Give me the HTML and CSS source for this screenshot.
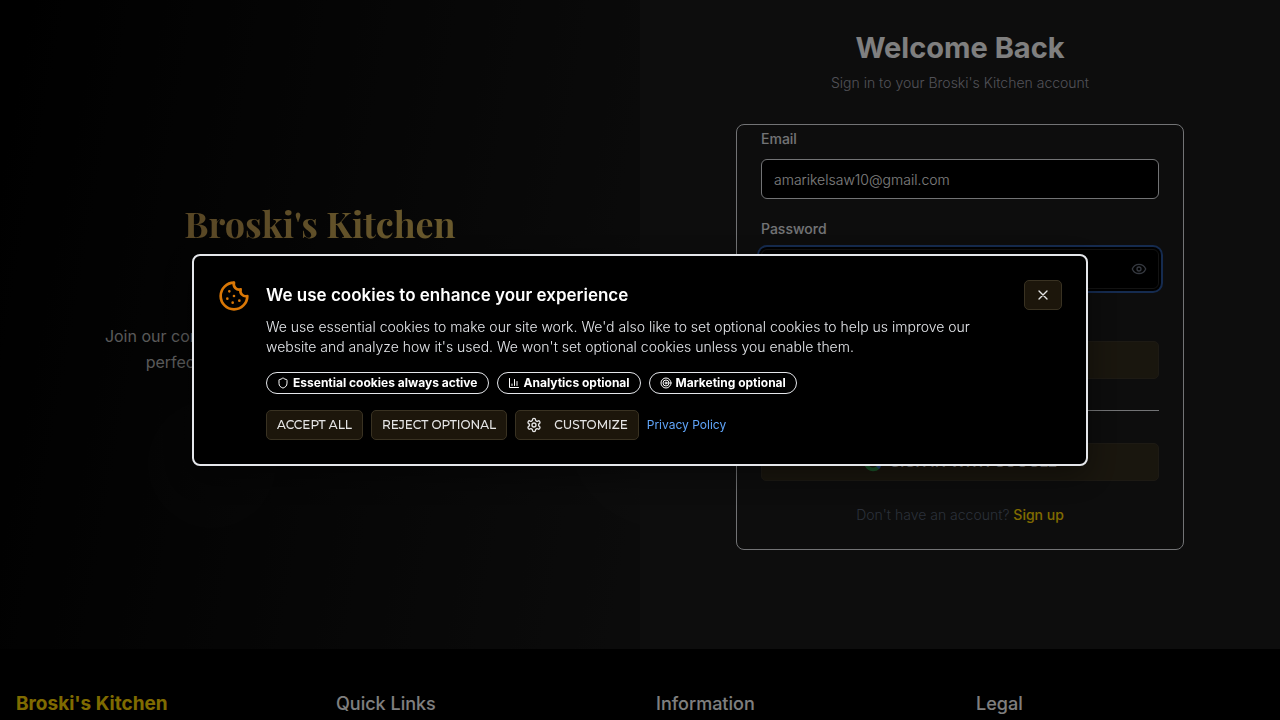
FILE: index.html
```html
<!DOCTYPE html>
<html lang="en">
<head>
<meta charset="utf-8">
<meta name="viewport" content="width=device-width, initial-scale=1">
<title>Broski's Kitchen - Sign in</title>
<link rel="stylesheet" href="styles.css">
</head>
<body>
<main class="auth">
  <section class="hero">
    <span class="orb orb-small"></span>
    <span class="orb orb-large"></span>
    <h1 class="hero-title">Broski's Kitchen</h1>
    <p class="hero-text">Join our community of food enthusiasts and discover the perfect blend of flavors in each and every bite</p>
  </section>
  <section class="login">
    <h2 class="login-title">Welcome Back</h2>
    <p class="login-subtitle">Sign in to your Broski's Kitchen account</p>
    <form class="card">
      <label class="label" for="email">Email</label>
      <input class="input" id="email" type="email" value="amarikelsaw10@gmail.com">
      <label class="label" for="password">Password</label>
      <div class="password focused">
        <input class="input" id="password" type="password">
        <button class="eye" type="button" aria-label="Show password">
          <svg width="16" height="16" viewBox="0 0 24 24" class="stroke"><path d="M2.1 12.3a1 1 0 0 1 0-.7 10.8 10.8 0 0 1 19.8 0 1 1 0 0 1 0 .7 10.8 10.8 0 0 1-19.8 0"/><circle cx="12" cy="12" r="3"/></svg>
        </button>
      </div>
      <button class="btn btn-wide btn-submit" type="submit">Sign in</button>
      <hr class="divider">
      <button class="btn btn-wide" type="button">
        <svg width="20" height="20" viewBox="0 0 24 24"><path fill="#4285F4" d="M22.6 12.3c0-.8-.1-1.5-.2-2.3H12v4.300h5.900a5 5 0 0 1-2.200 3.300v2.800h3.600c2.100-2 3.300-4.800 3.300-8.100z"/><path fill="#34A853" d="M12 23c3 0 5.500-1 7.300-2.700l-3.600-2.800c-1 .7-2.200 1.100-3.700 1.100-2.900 0-5.300-1.900-6.200-4.500H2.200v2.800A11 11 0 0 0 12 23z"/><path fill="#FBBC05" d="M5.800 14.100a6.600 6.600 0 0 1 0-4.200V7.100H2.200a11 11 0 0 0 0 9.800z"/><path fill="#EA4335" d="M12 5.400c1.600 0 3.100.6 4.200 1.600l3.200-3.100A11 11 0 0 0 2.200 7.100l3.600 2.800C6.700 7.300 9.100 5.400 12 5.400z"/></svg>
        <span>Sign in with Google</span>
      </button>
      <p class="signup">Don't have an account? <a href="#">Sign up</a></p>
    </form>
  </section>
</main>
<footer class="footer">
  <h2 class="brand">Broski's Kitchen</h2>
  <h3 class="footer-title">Quick Links</h3>
  <h3 class="footer-title">Information</h3>
  <h3 class="footer-title">Legal</h3>
</footer>
<div class="overlay">
  <div class="modal" role="dialog" aria-labelledby="cookie-title">
    <svg class="cookie stroke" width="32" height="32" viewBox="0 0 24 24"><path d="M12 2a10 10 0 1 0 10 10 4 4 0 0 1-5-5 4 4 0 0 1-5-5"/><path d="M8.500 8.500v.01M16 15.500v.01M12 12v.01M11 17v.01M7 14v.01"/></svg>
    <div class="modal-body">
      <h2 class="modal-title" id="cookie-title">We use cookies to enhance your experience</h2>
      <p class="modal-text">We use essential cookies to make our site work. We'd also like to set optional cookies to help us improve our website and analyze how it's used. We won't set optional cookies unless you enable them.</p>
      <div class="badges">
        <span class="badge"><svg class="stroke" width="12" height="12" viewBox="0 0 24 24"><path d="M20 13c0 5-3.500 7.500-7.700 9a1 1 0 0 1-.6 0C7.500 20.500 4 18 4 13V6a1 1 0 0 1 1-1c2 0 4.500-1.200 6.200-2.700a1.200 1.200 0 0 1 1.600 0C14.500 3.800 17 5 19 5a1 1 0 0 1 1 1z"/></svg>Essential cookies always active</span>
        <span class="badge"><svg class="stroke" width="12" height="12" viewBox="0 0 24 24"><path d="M3 3v18h18M18 17V9M13 17V5M8 17v-3"/></svg>Analytics optional</span>
        <span class="badge"><svg class="stroke" width="12" height="12" viewBox="0 0 24 24"><circle cx="12" cy="12" r="10"/><circle cx="12" cy="12" r="6"/><circle cx="12" cy="12" r="2"/></svg>Marketing optional</span>
      </div>
      <div class="actions">
        <button class="btn" type="button">Accept All</button>
        <button class="btn" type="button">Reject Optional</button>
        <button class="btn btn-icon" type="button"><svg class="stroke" width="16" height="16" viewBox="0 0 24 24"><path d="M12.220 2h-.44a2 2 0 0 0-2 2v.18a2 2 0 0 1-1 1.730l-.43.25a2 2 0 0 1-2 0l-.15-.08a2 2 0 0 0-2.730.73l-.22.38a2 2 0 0 0 .73 2.730l.15.1a2 2 0 0 1 1 1.720v.51a2 2 0 0 1-1 1.740l-.15.09a2 2 0 0 0-.73 2.730l.22.38a2 2 0 0 0 2.730.73l.15-.08a2 2 0 0 1 2 0l.43.25a2 2 0 0 1 1 1.730V20a2 2 0 0 0 2 2h.44a2 2 0 0 0 2-2v-.18a2 2 0 0 1 1-1.730l.43-.25a2 2 0 0 1 2 0l.15.08a2 2 0 0 0 2.730-.73l.22-.39a2 2 0 0 0-.73-2.730l-.15-.08a2 2 0 0 1-1-1.740v-.5a2 2 0 0 1 1-1.740l.15-.09a2 2 0 0 0 .73-2.730l-.22-.38a2 2 0 0 0-2.730-.73l-.15.08a2 2 0 0 1-2 0l-.43-.25a2 2 0 0 1-1-1.730V4a2 2 0 0 0-2-2z"/><circle cx="12" cy="12" r="3"/></svg>Customize</button>
        <a class="policy" href="#">Privacy Policy</a>
      </div>
    </div>
    <button class="btn close" type="button" aria-label="Close"><svg class="stroke" width="16" height="16" viewBox="0 0 24 24"><path d="M18 6 6 18M6 6l12 12"/></svg></button>
  </div>
</div>
</body>
</html>
```
FILE: styles.css
```css
* { box-sizing: border-box; }
body {
  margin: 0;
  height: 100vh;
  overflow: hidden;
  background: #000;
  color: #fff;
  font-family: Inter, "Liberation Sans", sans-serif;
  font-size: 14px;
  font-weight: 300;
  line-height: 20px;
}
h1, h2, h3, p { margin: 0; }
button, input { font: inherit; }
.stroke {
  fill: none;
  stroke: currentColor;
  stroke-width: 2;
  stroke-linecap: round;
  stroke-linejoin: round;
  flex: none;
}

.auth {
  display: grid;
  grid-template-columns: 1fr 1fr;
  min-height: calc(100vh - 71px);
}
.hero {
  position: relative;
  overflow: hidden;
  display: flex;
  flex-direction: column;
  align-items: center;
  padding: 195px 32px 0;
  background: linear-gradient(100deg, #000, #171717);
  text-align: center;
}
.orb {
  position: absolute;
  border-radius: 50%;
  background: rgba(255, 255, 255, 0.012);
}
.orb-small { width: 128px; height: 128px; left: 148px; bottom: 121px; }
.orb-large { width: 192px; height: 192px; right: -120px; bottom: 121px; }
.hero-title {
  font-family: "Playfair Display", "Liberation Serif", serif;
  font-size: 36px;
  line-height: 56px;
  font-weight: 700;
  background: linear-gradient(90deg, #b08d4a, #d4b45a);
  background-clip: text;
  color: transparent;
}
.hero-text {
  max-width: 448px;
  margin-top: 72px;
  font-size: 16px;
  font-weight: 400;
  line-height: 26px;
  color: #b3b3b3;
}

.login {
  display: flex;
  flex-direction: column;
  align-items: center;
  padding: 28px 32px 0;
  background: #1a1a1a;
}
.login-title { font-size: 29px; line-height: 40px; font-weight: 700; }
.login-subtitle { margin-top: 5px; color: #a2a2ae; }
.card {
  display: flex;
  flex-direction: column;
  width: 100%;
  max-width: 448px;
  margin-top: 31px;
  padding: 4px 24px 24px;
  border: 1px solid #e5e7eb;
  border-radius: 8px;
}
.label { font-weight: 500; color: #e5e7eb; }
.input {
  width: 100%;
  height: 40px;
  margin-top: 10px;
  padding: 0 12px;
  border: 1px solid #e5e7eb;
  border-radius: 6px;
  background: #000;
  color: #fff;
}
.input + .label { margin-top: 20px; }
.password { position: relative; margin-top: 10px; }
.password .input { display: block; margin: 0; border-color: #262626; }
.focused .input { box-shadow: 0 0 0 2px #000, 0 0 0 4px #2b569f; }
.eye {
  position: absolute;
  top: 0;
  right: 0;
  display: grid;
  place-items: center;
  width: 40px;
  height: 40px;
  padding: 0;
  border: 0;
  background: none;
  color: #6b7280;
}
.btn {
  display: flex;
  align-items: center;
  justify-content: center;
  height: 30px;
  padding: 0 10px;
  border: 1px solid #393222;
  border-radius: 5px;
  background: #1c160b;
  color: #e5e5e5;
  font-family: Montserrat, Inter, sans-serif;
  font-size: 12px;
  font-weight: 500;
  text-transform: uppercase;
  white-space: nowrap;
}
.btn-wide {
  gap: 8px;
  height: 38px;
  border-color: #3a3428;
  background: #332c1c;
  font-size: 14px;
  font-weight: 600;
}
.btn-submit { margin-top: 52px; }
.divider {
  width: 100%;
  margin: 31px 0 32px;
  border: 0;
  border-top: 1px solid #e5e7eb;
}
.signup { margin-top: 24px; text-align: center; color: #566173; }
.signup a { color: #ffd700; font-weight: 500; text-decoration: none; }

.footer {
  display: grid;
  grid-template-columns: repeat(4, 1fr);
  gap: 32px;
  padding: 41px 16px 0;
  background: #000;
}
.brand { font-size: 19px; line-height: 28px; font-weight: 700; color: #ffd700; }
.footer-title { font-size: 18px; line-height: 28px; font-weight: 500; }

.overlay {
  position: fixed;
  inset: 0;
  display: flex;
  align-items: center;
  justify-content: center;
  padding: 16px;
  background: rgba(0, 0, 0, 0.5);
}
.modal {
  display: flex;
  align-items: flex-start;
  gap: 16px;
  width: 100%;
  max-width: 896px;
  padding: 24px;
  border: 2px solid #e5e7eb;
  border-radius: 8px;
  background: #000;
  box-shadow: 0 10px 30px rgba(0, 0, 0, 0.4);
}
.cookie { color: #d97706; }
.modal-body { flex: 1; }
.modal-title { font-size: 17px; line-height: 30px; font-weight: 600; }
.modal-text { margin-top: 7px; color: #e5e7eb; }
.badges, .actions { display: flex; flex-wrap: wrap; gap: 8px; }
.badges { margin-top: 15px; }
.badge {
  display: flex;
  align-items: center;
  gap: 4px;
  height: 22px;
  padding: 0 10px;
  border: 1px solid #e5e7eb;
  border-radius: 11px;
  font-size: 12px;
  font-weight: 700;
}
.actions { align-items: center; margin-top: 16px; }
.btn-icon { gap: 12px; }
.policy { color: #60a5fa; font-size: 12px; font-weight: 400; text-decoration: none; }
.close { width: 38px; }
```
